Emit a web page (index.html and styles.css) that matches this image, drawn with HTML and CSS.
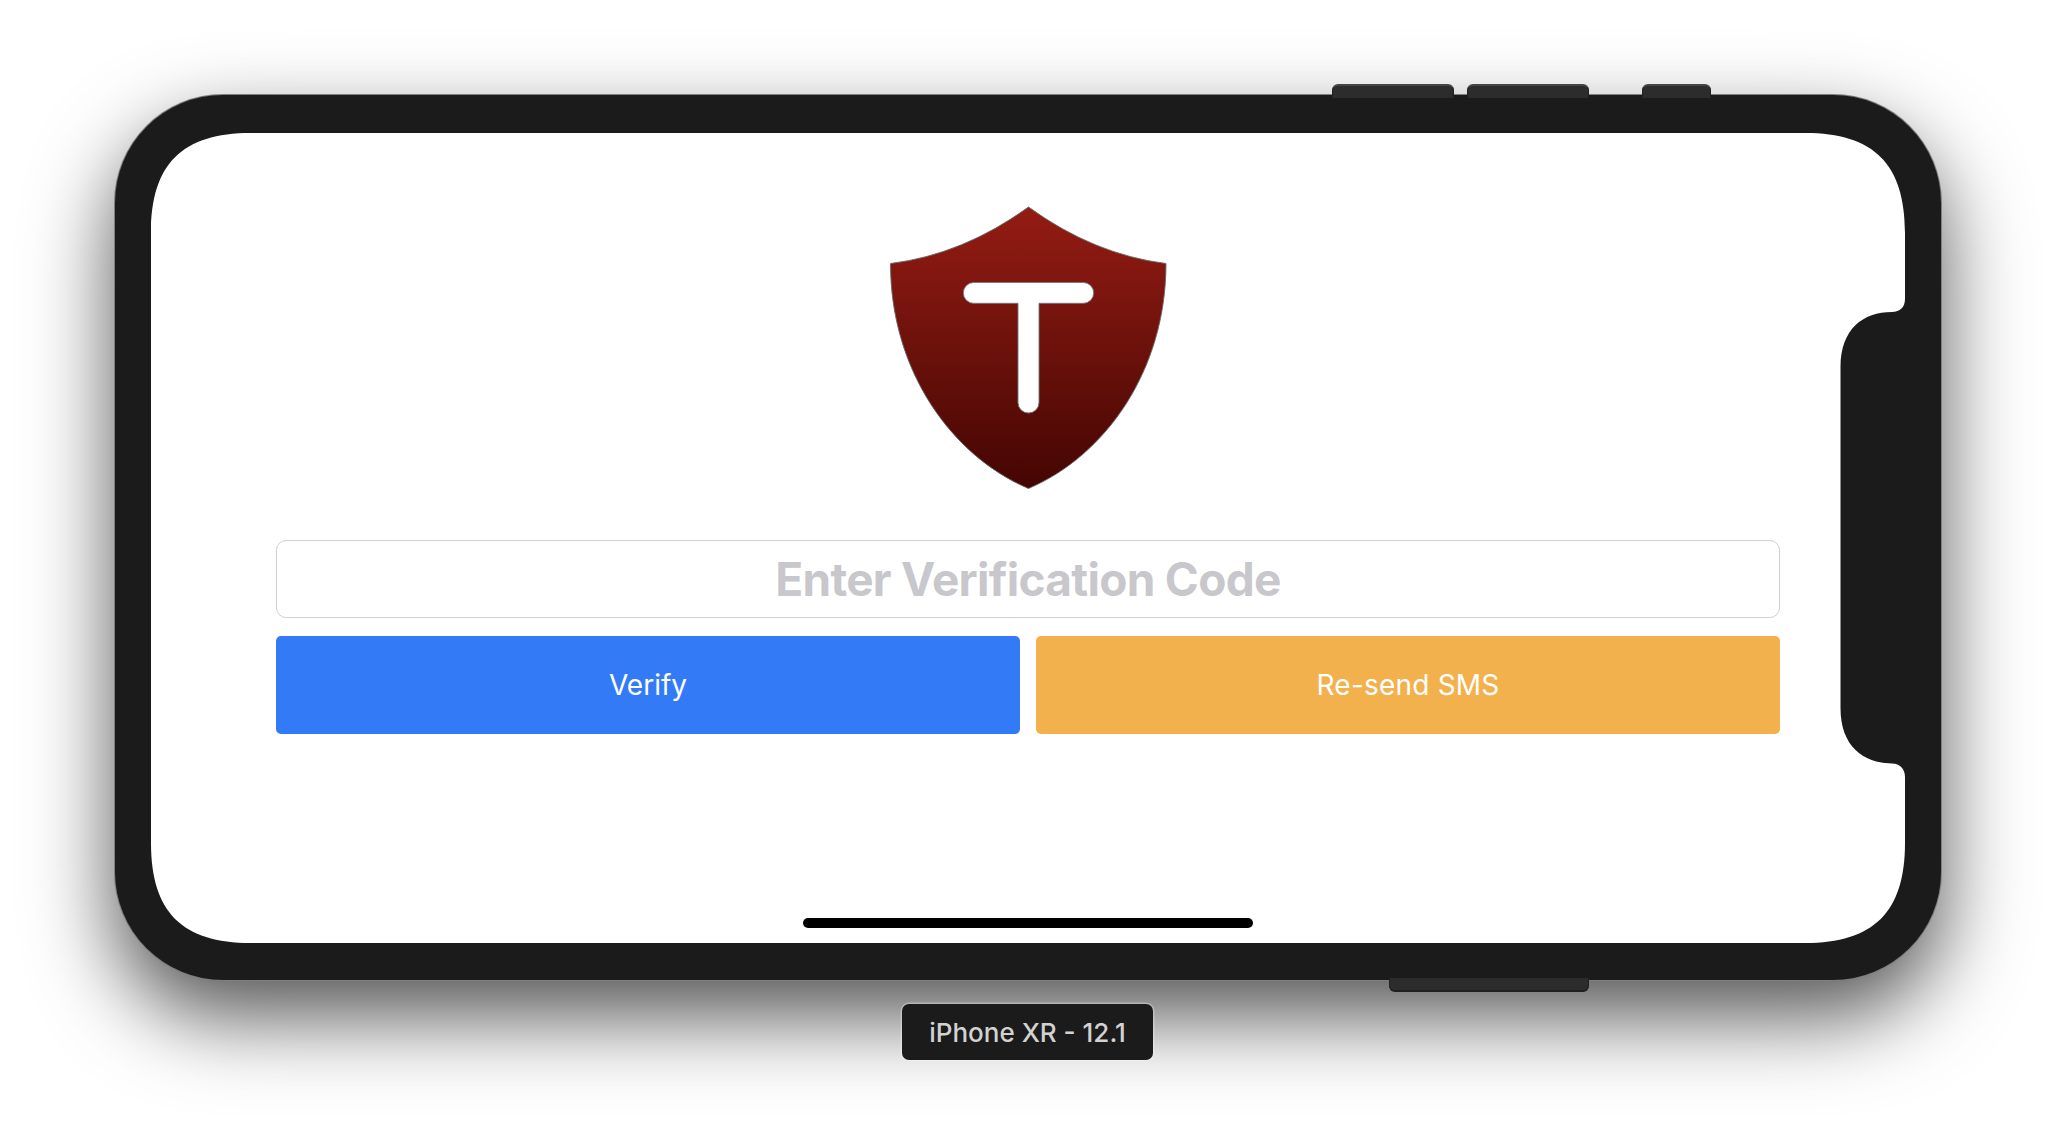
FILE: index.html
```html
<!DOCTYPE html>
<html lang="en">
<head>
<meta charset="utf-8">
<title>iPhone XR - 12.1</title>
<link rel="stylesheet" href="styles.css">
</head>
<body>
<main class="simulator">
  <div class="phone">
    <i class="key key-volume-down"></i>
    <i class="key key-volume-up"></i>
    <i class="key key-mute"></i>
    <i class="key key-power"></i>
    <section class="screen">
      <svg class="screen-shape" viewBox="0 0 1754 810" aria-hidden="true">
        <path fill="#fff" d="M100 0H1654C1723 0 1754 31 1754 100V166C1754 174 1749 179 1741 179C1712 179 1689.500 196 1689.500 234V575C1689.500 613 1712 630 1741 630.500C1749 630.500 1754 636 1754 644V710C1754 779 1723 810 1654 810H100C31 810 0 779 0 710V100C0 31 31 0 100 0Z"/>
      </svg>
      <svg class="logo" viewBox="0 0 277 284" aria-hidden="true">
        <defs>
          <linearGradient id="shade" x1="0" y1="0" x2="0" y2="1">
            <stop offset="0" stop-color="#941c13"/>
            <stop offset=".28" stop-color="#7e160f"/>
            <stop offset=".6" stop-color="#640f09"/>
            <stop offset="1" stop-color="#440503"/>
          </linearGradient>
        </defs>
        <path fill="url(#shade)" stroke="#666" stroke-width=".9" d="M138.500 1Q204 48.500 276 57.500C276 165 215 250 138.500 282.500C62 250 .5 165 .5 57.500Q73 48.500 138.500 1Z"/>
        <path fill="#fff" stroke="#777" stroke-width=".9" d="M83.700 76.500H193.300A10.400 10.400 0 0 1 193.300 97.300H149V196.500A10.500 10.500 0 0 1 128 196.500V97.300H83.700A10.400 10.400 0 0 1 83.700 76.500Z"/>
      </svg>
      <form class="form">
        <input class="code" type="text" placeholder="Enter Verification Code" aria-label="Enter Verification Code">
        <div class="actions">
          <button class="button verify" type="button">Verify</button>
          <button class="button resend" type="button">Re-send SMS</button>
        </div>
      </form>
      <div class="home-bar"></div>
    </section>
  </div>
  <div class="device-name">iPhone XR - 12.1</div>
</main>
</body>
</html>
```
FILE: styles.css
```css
* { box-sizing: border-box; }

body {
  margin: 0;
  height: 1148px;
  overflow: hidden;
  background: #fff;
  font-family: Inter, "Liberation Sans", sans-serif;
}

.simulator {
  display: flex;
  flex-direction: column;
  align-items: center;
  gap: 24px;
  padding-top: 95px;
}

.phone {
  position: relative;
  width: 1826px;
  height: 885px;
  padding: 38px 36px 37px;
  border-radius: 108px;
  background: #1b1b1b;
  box-shadow: 0 0 0 1px #7d8080, 0 36px 84px rgba(0, 0, 0, .68);
}

.key {
  position: absolute;
  top: -11px;
  height: 14px;
  background: #2c2c2c;
  border: 1px solid #202020;
  border-top: 2px solid #444;
  border-bottom: 0;
  border-radius: 6px 6px 0 0;
}

.key-volume-down { left: 1217px; width: 122px; }
.key-volume-up { left: 1352px; width: 122px; }
.key-mute { left: 1527px; width: 69px; }

.key-power {
  top: auto;
  bottom: -12px;
  left: 1274px;
  width: 200px;
  border-top: 0;
  border-bottom: 2px solid #202020;
  border-radius: 0 0 6px 6px;
}

.screen {
  position: relative;
  display: flex;
  flex-direction: column;
  align-items: center;
  height: 810px;
  padding: 73px 125px 15px;
}

.screen-shape {
  position: absolute;
  inset: 0;
  width: 1754px;
  height: 810px;
}

.logo {
  position: relative;
  width: 277px;
  height: 284px;
}

.form {
  position: relative;
  display: flex;
  flex-direction: column;
  gap: 18px;
  width: 1504px;
  margin-top: 50px;
}

.code {
  width: 100%;
  height: 78px;
  padding: 0;
  border: 1px solid #d0d0d2;
  border-radius: 10px;
  background: #fff;
  font: 700 46px/76px Inter, "Liberation Sans", sans-serif;
  letter-spacing: -.7px;
  text-align: center;
}

.code::placeholder { color: #c7c7cc; opacity: 1; }

.actions { display: flex; gap: 16px; }

.button {
  flex: 1;
  height: 98px;
  padding: 0;
  border: 0;
  border-radius: 5px;
  color: #fff;
  font: 400 28px/98px Inter, "Liberation Sans", sans-serif;
}

.verify { background: #337bf6; }
.resend { background: #f3b14e; letter-spacing: .2px; }

.home-bar {
  position: relative;
  width: 450px;
  height: 10px;
  margin-top: auto;
  border-radius: 5px;
  background: #000;
}

.device-name {
  position: relative;
  width: 251px;
  height: 56px;
  margin-right: 1px;
  border-radius: 7px;
  background: #1b1b1b;
  box-shadow: 0 0 0 1.500px rgba(255, 255, 255, .3);
  color: #d2d2d2;
  font-size: 26px;
  font-weight: 500;
  line-height: 58px;
  text-align: center;
}
```
